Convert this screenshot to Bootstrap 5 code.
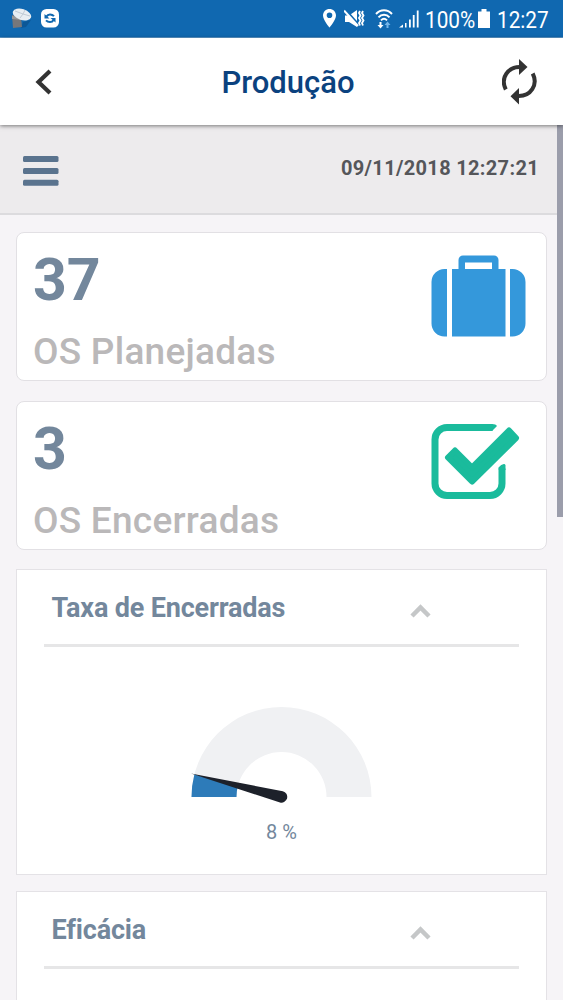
<!DOCTYPE html>
<html lang="pt-BR">
<head>
<meta charset="utf-8">
<meta name="viewport" content="width=device-width, initial-scale=1">
<title>Produção</title>
<link href="https://cdn.jsdelivr.net/npm/bootstrap@5.3.0/dist/css/bootstrap.min.css" rel="stylesheet">
<style>
body{font-family:Roboto,sans-serif;background:#f6f4f7;height:1000px;overflow:hidden;color:#73879c}
svg{display:block;flex:none}
.status-bar{height:38px;background:#1068b0;color:#fff;border-bottom:1px solid #5b97c9;padding:0 14px 0 10px}
.status-bar span{font-size:24px;line-height:38px;white-space:nowrap}
.status-bar .squeeze{display:inline-block;transform-origin:0 50%;transform:translateY(1px) scaleX(.865)}
.app-bar{height:87px;background:#fff;box-shadow:0 1px 4px rgba(0,0,0,.5);z-index:2;position:relative;padding:0 26px 0 34px}
.app-bar h1{font-size:31px;font-weight:500;color:#0b427f;line-height:36px;padding:2px 0 0 21px}
.tool-bar{height:90px;background:#edebed;border-bottom:2px solid #dcdbde;padding:0 24px 0 23px}
.tool-bar time{font-size:20px;font-weight:700;color:#55565a;line-height:24px;letter-spacing:.33px;padding-bottom:2px}
main{height:785px;overflow:hidden;padding:17px 16px 0}
.tile{height:149px;border:1px solid #e2e0e4;border-radius:8px;margin-bottom:20px;padding:0 20px 0 16px}
.tile-num{font-size:59px;font-weight:700;line-height:60px;padding-top:17px}
.tile-label{font-size:37px;font-weight:500;line-height:44px;color:#bab8b9;padding-top:20px;white-space:nowrap;letter-spacing:.25px}
.tile svg{margin-top:22px}
.panel{background:#fff;border:1px solid #e4e2e6;height:306px;margin-bottom:16px;padding:0 27px}
.panel-first{margin-top:-1px}
.panel-head{height:77px;border-bottom:3px solid #e6e6e7;padding:0 88px 0 7.500px}
.panel-head h2{font-size:27px;font-weight:700;line-height:32px;white-space:nowrap;letter-spacing:-.17px;padding-top:2px}
.panel-head svg{margin-top:7px}
.gauge-value{font-size:20px;line-height:24px}
.scroll-thumb{position:absolute;right:0;top:125px;width:6px;height:392px;background:#9b9dab;z-index:1}
</style>
</head>
<body class="position-relative">
<header class="status-bar d-flex align-items-center">
  <svg width="23" height="24" viewBox="0 0 23 24"><path d="M13 15l8-2-5 7-5 1z" fill="#0c5797"/><path d="M2 8l9 2 1 10-9 1z" fill="#77777a"/><path d="M2 9l9 1v3l-9-1z" fill="#999"/><ellipse cx="12" cy="7.5" rx="9.5" ry="5.500" transform="rotate(18 12 7.5)" fill="#e8eef3"/><path d="M5 4l8 3 7 2M13 7l-3 4M13 7l2-4" stroke="#c0cbd5" fill="none"/></svg>
  <svg class="ms-2" width="18" height="19" viewBox="0 0 18 19"><rect width="18" height="18.5" rx="5.5" fill="#fff"/><path d="M5.500 7.500C7 4.500 11 5 13 7.200M12.500 11C11 14 7 13.500 5 11.300" fill="none" stroke="#1068b0" stroke-width="2"/><path d="M3.500 5v4.500h5zM14.500 13.500V9h-5z" fill="#1068b0"/></svg>
  <svg class="ms-auto" width="13" height="20" viewBox="0 0 13 20"><path fill="#fff" fill-rule="evenodd" d="M6.500 0C3 0 0 2.700 0 6.500 0 11 6.500 18.500 6.500 18.500S13 11 13 6.500C13 2.700 10 0 6.500 0zm0 3.500a2.800 2.800 0 1 1 0 5.600 2.800 2.800 0 0 1 0-5.600z"/></svg>
  <svg style="margin-left:8px" width="21" height="20" viewBox="0 0 21 20"><path d="M1 6.500h4L13 1v17l-8-5H1z" fill="#fff"/><path d="M1 0l14 16" stroke="#1068b0" stroke-width="2"/><path d="M0 1.500L14 17" stroke="#fff" stroke-width="2"/><path d="M16 2l-1 2 1.500 2.500L15 9l1.500 2.500L15 14l1 2.500M19 2l-1 2 1.500 2.500L18 9l1.500 2.500L18 14l1 2.500" stroke="#fff" stroke-width="1.800" fill="none"/></svg>
  <svg style="margin-left:10px" width="18" height="20" viewBox="0 0 18 20"><g fill="none" stroke="#fff" stroke-width="1.900"><path d="M1 5c4.500-5 11.500-5 16 0M3.500 8.300c3-3.500 8-3.500 11 0M6 11.300c2-2 4-2 6 0"/></g><path d="M4.500 13h2v3h2l-3 3.500-3-3.500h2z" fill="#fff"/><path d="M11.500 19v-3h-2l3-3.500 3 3.500h-2v3z" fill="#73b4e8"/></svg>
  <svg style="margin-left:6px" width="20" height="20" viewBox="0 0 20 20"><path d="M0 18.500l4-3v3zM6 14h1.500v4.500H6zM10 10.500h1.800v8H10zM13.800 6h1.800v12.500h-1.800zM17.800 1.500h1.800v17h-1.800z" fill="#fff"/></svg>
  <span style="margin-left:6px;width:51px"><span class="squeeze">100%</span></span>
  <svg style="margin-left:2px" width="12" height="20" viewBox="0 0 12 20"><path d="M3.500 0h5v2.500H12V19H0V2.500h3.500z" fill="#fff"/></svg>
  <span style="margin-left:7px;width:52px"><span class="squeeze">12:27</span></span>
</header>
<nav class="app-bar d-flex align-items-center justify-content-between">
  <svg width="19" height="28" viewBox="0 0 19 28"><path d="M16 3L4.500 14 16 25" fill="none" stroke="#333" stroke-width="4.200"/></svg>
  <h1 class="m-0">Produção</h1>
  <svg width="35" height="48" viewBox="0 0 35 48"><g fill="none" stroke="#333" stroke-width="4"><path d="M3.800 31.500C-2 20 6 8.800 18 9"/><path d="M30.700 15.500C36.500 27 28.500 38.200 16.500 38"/></g><path d="M17 1l8.500 8-8.500 8zM17 30v16.500L8.500 38.200z" fill="#333"/></svg>
</nav>
<section class="tool-bar d-flex align-items-center justify-content-between">
  <svg class="mt-1" width="36" height="30" viewBox="0 0 36 30"><g fill="#5a738e"><rect width="35.500" height="6" rx="1.500"/><rect y="12" width="35.500" height="6" rx="1.500"/><rect y="23.700" width="35.500" height="6" rx="1.500"/></g></svg>
  <time>09/11/2018 12:27:21</time>
</section>
<main>
  <div class="tile bg-white d-flex justify-content-between">
    <div><div class="tile-num">37</div><div class="tile-label">OS Planejadas</div></div>
    <svg width="95" height="82" viewBox="0 0 95 82"><path fill="#3498db" fill-rule="evenodd" d="M16 14v67.500h-2.500A13 13 0 0 1 .5 68.500V27a13 13 0 0 1 13-13zM79 14h2.500a13 13 0 0 1 13 13v41.500a13 13 0 0 1-13 13H79zM21 14h6.500V5a4.500 4.500 0 0 1 4.500-4.500h31A4.500 4.500 0 0 1 67.500 5v9h7v67.500H21zM34 7.500V14h27V7.500z"/></svg>
  </div>
  <div class="tile bg-white d-flex justify-content-between">
    <div><div class="tile-num">3</div><div class="tile-label">OS Encerradas</div></div>
    <svg width="95" height="82" viewBox="0 1.500 95 82"><path d="M61.500 5H16A12 12 0 0 0 4 17v44a12 12 0 0 0 12 12h43a12 12 0 0 0 12-12V46" fill="none" stroke="#1abb9c" stroke-width="7"/><path d="M61 1.500q4 0 5 2l-5 5zM67.500 47V45q3-4 6-3.500l1 1v5z" fill="#1abb9c"/><path d="M17 35l7-7 17 17L78 8l7 7.500L41 59z" fill="#1abb9c" stroke="#1abb9c" stroke-width="6" stroke-linejoin="round"/></svg>
  </div>
  <section class="panel panel-first">
    <div class="panel-head d-flex align-items-center justify-content-between"><h2 class="m-0">Taxa de Encerradas</h2>
      <svg width="21" height="14" viewBox="0 0 21 14"><path d="M2 12l8.500-8.500L19 12" fill="none" stroke="#c5c7c8" stroke-width="4.500"/></svg></div>
    <div class="d-flex flex-column align-items-center">
      <svg style="margin-top:59px" width="181" height="97" viewBox="0 0 181 97"><path d="M.5 91a90 90 0 0 1 180 0h-45a45 45 0 0 0-90 0z" fill="#f0f1f3"/><path d="M.5 91A90 90 0 0 1 3.330 68.600L46.900 79.800A45 45 0 0 0 45.500 91z" fill="#2d7bb9"/><path d="M0 67.500L91.800 85.200A5.800 5.800 0 1 1 89 96.500z" fill="#1d212a"/></svg>
      <div class="gauge-value" style="margin-top:17px">8 %</div>
    </div>
  </section>
  <section class="panel">
    <div class="panel-head d-flex align-items-center justify-content-between"><h2 class="m-0">Eficácia</h2>
      <svg width="21" height="14" viewBox="0 0 21 14"><path d="M2 12l8.500-8.500L19 12" fill="none" stroke="#c5c7c8" stroke-width="4.500"/></svg></div>
  </section>
</main>
<div class="scroll-thumb"></div>
<script src="https://cdn.jsdelivr.net/npm/bootstrap@5.3.0/dist/js/bootstrap.bundle.min.js"></script>
</body>
</html>
